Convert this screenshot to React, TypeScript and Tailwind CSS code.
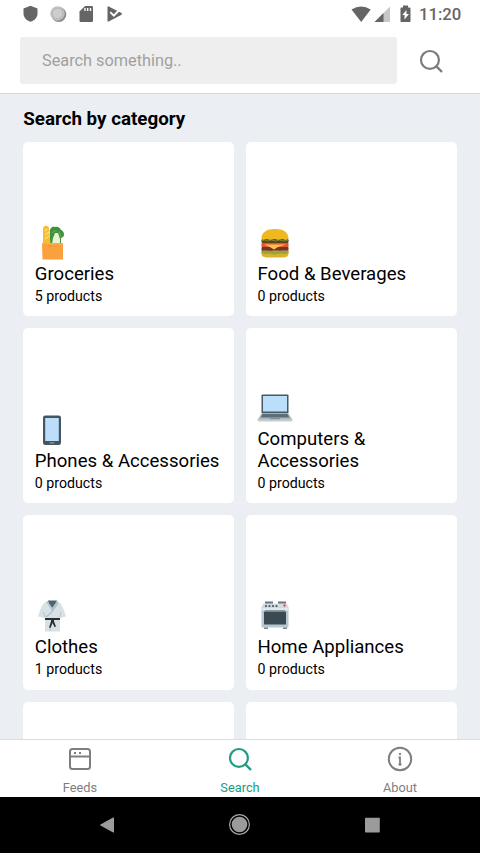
import type { ReactNode } from "react";

const font = { fontFamily: 'Roboto, "Liberation Sans", sans-serif' };

function Groceries() {
  return (
    <svg width="36" height="36" viewBox="0 0 36 36">
      <path d="M16 19V8c-1-4 2-7 5-6 3-1 5 1 6 3 3 1 4 5 2 7l-2 1v6z" fill="#3f9140" />
      <path d="M18 8c2-2 3-3 5-2M25 6l2 6" stroke="#64a84c" strokeWidth="1.200" fill="none" />
      <path d="M18 19l1-6 2-5h3l2 6v5z" fill="#eaf3cf" />
      <path d="M9 3c1-3 5-3 6 0l1.500 16H9z" fill="#f6bd32" />
      <path d="M10.500 6l3-2M11 10l4-3M11 14l4-3" stroke="#ffdf72" strokeWidth="1.400" />
      <path d="M8 18h21v16.500H8.500z" fill="#faa03f" />
      <path d="M8 18h21v1.500H8z" fill="#fbad4c" />
      <path d="M14.500 20c.4 2 7.500 2 8 0" stroke="#f39436" strokeWidth=".8" fill="none" />
    </svg>
  );
}

function Burger() {
  return (
    <svg width="36" height="36" viewBox="0 0 36 36">
      <path d="M4.500 26h27v3c0 2.500-3 3.500-6 3.500h-15c-3 0-6-1-6-3.500z" fill="#dbb12c" />
      <path d="M4.500 25l4 1 5-1 5 1.500 5-1 4 1 4-1v2.500l-4 1-5-.5-5 1-5-1-5 .5-3-1z" fill="#8baa36" />
      <rect x="4.500" y="21.500" width="27" height="4.200" rx="1.500" fill="#78351b" />
      <path d="M4.500 18h27v4h-27z" fill="#e55335" />
      <path d="M7 19.500h22l-8 2.500-4 2.500-5-3z" fill="#ffc44b" />
      <rect x="4.500" y="14" width="27" height="4" rx="1.200" fill="#66401d" />
      <path d="M4.500 14c0-7 5-10 13.500-10s13.500 3 13.500 10l-3 1-3-1-4 1-4-1-4 1-4-1-3 1z" fill="#eeb91e" />
      <path d="M4.500 16l3-1 3 1 4-1 4 1 4-1 4 1 5-1" stroke="#7c9137" strokeWidth=".9" fill="none" />
    </svg>
  );
}

function Phone() {
  return (
    <svg width="36" height="36" viewBox="0 0 36 36">
      <rect x="9" y="3.500" width="18" height="29.500" rx="2.300" fill="#46545e" />
      <rect x="11.200" y="6" width="13.600" height="23" fill="#bbdefb" />
      <rect x="15.500" y="30.300" width="5" height="1.300" rx=".65" fill="#8a9ba5" />
    </svg>
  );
}

function Laptop() {
  return (
    <svg width="36" height="36" viewBox="0 0 36 36">
      <rect x="4.500" y="4.500" width="27" height="19" rx=".8" fill="#455a64" />
      <rect x="6" y="6" width="24" height="15.500" fill="#bbdefb" />
      <path d="M4.500 23.500h27l4 6.500H.5z" fill="#aeb8bc" />
      <path d="M5.500 24h25l1.800 3.500H3.700z" fill="#5c6e77" />
      <path d="M13.500 27.500h9l.8 2h-10.600z" fill="#819098" />
      <path d="M.5 29.500h35v1.200l-1 .8h-33l-1-.8z" fill="#c7ced1" />
    </svg>
  );
}

function MartialArts() {
  return (
    <svg width="36" height="36" viewBox="0 0 36 36">
      <path d="M13 3.500h10c4 1 6 5 9 15L26 20v13.500H11V20L4 18.500C7 9 9 4.500 13 3.500z" fill="#d8e1e6" />
      <path d="M14 2.500h9L22 6l-3.500 4L15 6z" fill="#506571" />
      <path d="M13 3.500l5 8 5.500-8M24 5l-7 10-5 4" stroke="#b4c2cb" strokeWidth="1.500" fill="none" />
      <path d="M9.500 14l1.500 5M27 14l-1 5M17 24l-1 9" stroke="#b6c4cc" strokeWidth="1" />
      <path d="M11 20h15v2H11z" fill="#292f33" />
      <path d="M17 20.500h3v3l2 5-1.500.5-2-4-2 5-1.500-.5 2-6z" fill="#292f33" />
    </svg>
  );
}

function Stove() {
  return (
    <svg width="36" height="36" viewBox="0 0 36 36">
      <path d="M8 3.500h8V6H8zM21 3.500h8V6h-8z" fill="#687981" />
      <path d="M6 5.500h24l1.500 4h-27z" fill="#d3dde2" />
      <rect x="4.500" y="9" width="27" height="20.500" rx="1" fill="#b9c8d0" />
      <path d="M4.500 9.500h27v3h-27z" fill="#e1e8eb" />
      <circle cx="9" cy="8" r="1.100" fill="#46555d" /><circle cx="12.500" cy="8" r="1.100" fill="#46555d" /><circle cx="16" cy="8" r="1.100" fill="#46555d" /><circle cx="19.500" cy="8" r="1.100" fill="#46555d" />
      <circle cx="27.500" cy="7.500" r="1.200" fill="#dd5260" />
      <rect x="7" y="13.500" width="22" height="13" rx=".5" fill="#3b4a52" />
      <path d="M8 12.500h20" stroke="#8899a2" strokeWidth="1" />
      <path d="M7 29.500h4v1.500H7zM26 29.500h4v1.500h-4z" fill="#74858d" />
    </svg>
  );
}

function SearchIcon({ size }: { size: number }) {
  return (
    <svg width={size} height={size} viewBox="0 0 24 24" fill="none" stroke="currentColor" strokeWidth="2.100">
      <circle cx="10.500" cy="10.500" r="8.600" />
      <path d="M16.700 16.700L21.500 21.500" strokeLinecap="round" />
    </svg>
  );
}

function StatusBar() {
  return (
    <div className="flex h-7 items-center justify-between pl-[22px] pr-[18px] text-[#656565]">
      <div className="flex items-center gap-3">
        <svg width="16" height="18" viewBox="0 0 16 18"><path d="M8.500.8l7 2.700v5c0 4-3 7-7 8.300-4-1.300-7-4.300-7-8.300v-5z" fill="currentColor" /></svg>
        <svg width="17" height="18" viewBox="0 0 17 18"><circle cx="8.800" cy="9.500" r="7.500" fill="#8a8a8a" /><circle cx="7.500" cy="8.500" r="7.200" fill="#c0c0c0" /><circle cx="7.500" cy="8.500" r="5.200" fill="#cdcdcd" stroke="#b3b3b3" strokeWidth=".8" /></svg>
        <svg width="16" height="18" viewBox="0 0 16 18"><path d="M6 1h6.500c1 0 1.500.5 1.500 1.500v13c0 1-.5 1.500-1.500 1.500H2C1 17 .5 16.500.5 15.500V6.500z" fill="currentColor" /><path d="M6 3v3M8.700 3v3M11.500 3v3" stroke="#fff" strokeWidth="1.400" /></svg>
        <svg width="17" height="18" viewBox="0 0 17 18"><path d="M.5 2.200c0-.8.500-1.200 1.200-.8L14 7.800c1.300.7 1.300 1.500 0 2.200L1.700 16.500c-.7.400-1.200 0-1.200-.8z" fill="currentColor" /><path d="M3.300 7.200l3.500 3.500 7-7.200" stroke="#fff" strokeWidth="1.900" fill="none" /></svg>
      </div>
      <div className="flex items-center">
        <svg width="21" height="18" viewBox="0 0 21 18"><path d="M1.500 4.500Q11.200-1.500 20.700 4.500L11.200 17z" fill="currentColor" /></svg>
        <svg className="ml-[2px]" width="17" height="18" viewBox="0 0 17 18"><path d="M17 1.500v15.500H1.500z" fill="#c8c8c8" /><path d="M10.500 8v9h-9z" fill="currentColor" /></svg>
        <svg className="ml-[9px]" width="12" height="18" viewBox="0 0 12 18"><path d="M4 .5h5v2h1.500c.7 0 1 .4 1 1v12.500c0 .7-.3 1-1 1h-8c-.7 0-1-.3-1-1v-12.500c0-.6.3-1 1-1H4z" fill="currentColor" /><path d="M7.500 5v4H10l-4.500 5.500v-4.500H3.300z" fill="#fff" /></svg>
        <span className="ml-2 mt-[2px] w-[43px] whitespace-nowrap text-[16.700px] font-medium leading-5">11:20</span>
      </div>
    </div>
  );
}

function Card({ icon, title, count }: { icon: ReactNode; title: string; count: number }) {
  return (
    <article className="flex h-[174.600px] flex-col justify-end rounded-[5px] bg-white pb-[11.100px] pl-[11.500px]">
      <div className="-ml-px">{icon}</div>
      <h2 className="mt-[2px] text-[18.600px] leading-[22px] text-black">{title}</h2>
      <p className="mt-[2px] text-[14.200px] leading-[18px] text-black">{count} products</p>
    </article>
  );
}

function Tab({ icon, label, active = false }: { icon: ReactNode; label: string; active?: boolean }) {
  return (
    <button className={`flex flex-1 flex-col items-center pt-[6px] ${active ? "text-[#219b82]" : "text-[#7e7e7e]"}`}>
      <span className="flex h-[26px] items-center">{icon}</span>
      <span className="mt-[8px] text-[12.800px] leading-4">{label}</span>
    </button>
  );
}

export default function App() {
  return (
    <div className="flex h-[853px] w-[480px] flex-col overflow-hidden bg-white" style={font}>
      <StatusBar />
      <header className="flex h-[66px] shrink-0 items-start border-b border-[#d3d8da] pl-5 pt-[9px]">
        <input className="h-[47px] w-[377px] rounded-[3px] bg-[#eeeeee] px-[22px] text-[16.300px] outline-none placeholder:text-[#a0a0a0]" placeholder="Search something.." />
        <button className="ml-[21.500px] mt-[11.500px] text-[#7c7c7c]"><SearchIcon size={25} /></button>
      </header>
      <main className="min-h-0 flex-1 overflow-hidden bg-[#ebeff3] px-[23.300px] pt-[12.800px]">
        <h1 className="text-[18.750px] font-bold leading-6 text-black">Search by category</h1>
        <div className="mt-[11px] grid grid-cols-2 gap-3">
          <Card icon={<Groceries />} title="Groceries" count={5} />
          <Card icon={<Burger />} title="Food & Beverages" count={0} />
          <Card icon={<Phone />} title="Phones & Accessories" count={0} />
          <Card icon={<Laptop />} title="Computers & Accessories" count={0} />
          <Card icon={<MartialArts />} title="Clothes" count={1} />
          <Card icon={<Stove />} title="Home Appliances" count={0} />
          <div className="h-[174px] rounded-[5px] bg-white" />
          <div className="h-[174px] rounded-[5px] bg-white" />
        </div>
      </main>
      <nav className="flex h-[58px] shrink-0 border-t border-[#d9dde0] bg-white">
        <Tab label="Feeds" icon={<svg width="24" height="24" viewBox="0 0 24 24" fill="none" stroke="currentColor" strokeWidth="2"><rect x="2" y="2" width="20" height="20" rx="2.500" /><path d="M2 9.500h20" /><path d="M6 6h2M11 6h2" /></svg>} />
        <Tab active label="Search" icon={<SearchIcon size={25} />} />
        <Tab label="About" icon={<svg width="26" height="26" viewBox="0 0 26 26" fill="none" stroke="currentColor" strokeWidth="2"><circle cx="13" cy="13" r="11.200" /><path d="M11.500 11.500H13v7M11.500 18.500h3" strokeWidth="1.800" /><circle cx="13" cy="8" r=".8" fill="currentColor" strokeWidth="1" /></svg>} />
      </nav>
      <footer className="flex h-14 shrink-0 items-center justify-between bg-black pl-[99px] pr-[99px]">
        <svg width="16" height="18" viewBox="0 0 16 18"><path d="M14.500 1.800v14.400L1.500 9z" fill="#9b9b9b" stroke="#9b9b9b" strokeLinejoin="round" /></svg>
        <svg width="22" height="22" viewBox="0 0 22 22"><circle cx="10.500" cy="10.500" r="9.900" fill="none" stroke="#aaa" strokeWidth="1.200" /><circle cx="10.500" cy="10.500" r="7.800" fill="#9b9b9b" /></svg>
        <svg width="17" height="17" viewBox="0 0 17 17"><rect x="1" y=".8" width="14.800" height="14.800" rx=".8" fill="#9b9b9b" /></svg>
      </footer>
    </div>
  );
}
